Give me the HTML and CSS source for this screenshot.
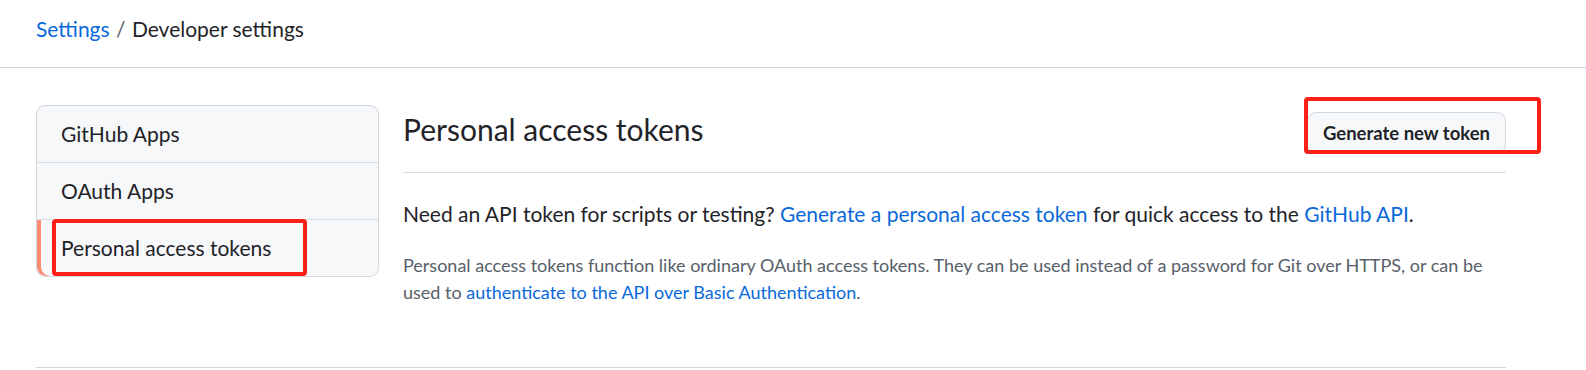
FILE: index.html
```html
<!DOCTYPE html>
<html lang="en">
<head>
  <meta charset="UTF-8">
  <title>Developer settings</title>
  <meta name="viewport" content="width=device-width, initial-scale=1.0">
  <link rel="stylesheet" href="styles.css">
</head>
<body>
<header class="page-head">
  <nav class="crumbs">
    <a href="#">Settings</a>
    <span class="sep">/</span>
    <span class="current">Developer settings</span>
  </nav>
</header>

<div class="layout">
  <nav class="side-menu">
    <a class="menu-item" href="#">GitHub Apps</a>
    <a class="menu-item" href="#">OAuth Apps</a>
    <a class="menu-item selected" href="#">Personal access tokens<span class="mark mark-menu"></span></a>
  </nav>

  <main class="content">
    <div class="subhead">
      <h2>Personal access tokens</h2>
      <div class="subhead-actions">
        <a class="btn" href="#">Generate new token</a>
        <span class="mark mark-btn"></span>
      </div>
    </div>

    <p class="lead">Need an API token for scripts or testing? <a href="#">Generate a personal access token</a> for quick access to the <a href="#">GitHub API</a>.</p>
    <p class="note">Personal access tokens function like ordinary OAuth access tokens. They can be used instead of a password for Git over HTTPS, or can be used to <a href="#">authenticate to the API over Basic Authentication</a>.</p>
  </main>
</div>

<div class="foot-rule"></div>
</body>
</html>
```

FILE: styles.css
```css
body {
  margin: 0;
  font-family: Lato, 'Noto Sans', sans-serif;
  color: #1f2328;
  background: #fff;
}
a {
  color: #0969da;
  text-decoration: none;
}

/* Breadcrumb bar */
.page-head {
  height: 67px;
  border-bottom: 1px solid #d0d7de;
  padding-left: 36px;
}
.crumbs {
  font-size: 21px;
  line-height: 58px;
}
.crumbs .sep {
  color: #57606a;
  margin: 0 1px;
}

/* Sidebar + content */
.layout {
  display: flex;
  gap: 24px;
  width: 1470px;
  margin-left: 36px;
  padding-top: 37px;
}
.side-menu {
  width: 341px;
  flex-shrink: 0;
  align-self: flex-start;
  background: #f6f8fa;
  border: 1px solid #d0d7de;
  border-radius: 9px;
}
.menu-item {
  position: relative;
  display: block;
  height: 56px;
  line-height: 56px;
  padding-left: 24px;
  font-size: 21px;
  color: #1f2328;
  border-top: 1px solid #d8dee4;
}
.menu-item:first-child {
  border-top: 0;
}
.menu-item.selected {
  box-shadow: inset 4px 0 0 #fd8c73;
  border-bottom-left-radius: 9px;
}

.content {
  flex: 1;
  padding-top: 2px;
}
.subhead {
  display: flex;
  align-items: flex-end;
  justify-content: space-between;
  border-bottom: 1px solid #d8dee4;
  padding-bottom: 15px;
}
.subhead h2 {
  margin: 0 0 6px;
  font-size: 30px;
  font-weight: 400;
  line-height: 44px;
}
.subhead-actions {
  position: relative;
  margin-bottom: 3px;
}
.btn {
  display: block;
  height: 40px;
  line-height: 40px;
  padding: 0 15px;
  font-size: 18.5px;
  font-weight: 700;
  color: #1f2328;
  background: #f6f8fa;
  border: 1px solid #d0d7de;
  border-radius: 9px;
}

.lead {
  margin: 26px 0 0;
  font-size: 21px;
  line-height: 30px;
}
.note {
  margin: 23px 0 0;
  font-size: 18px;
  line-height: 27px;
  color: #57606a;
}

.foot-rule {
  width: 1470px;
  margin: 61px 0 0 36px;
  border-top: 1px solid #d0d7de;
}

/* red annotation boxes drawn over the screenshot */
.mark {
  position: absolute;
  border: 4px solid #fb1f17;
  border-radius: 4px;
  pointer-events: none;
}
.mark-menu {
  left: 15px;
  top: -1px;
  width: 247px;
  height: 49px;
}
.mark-btn {
  left: -3px;
  top: -15px;
  width: 229px;
  height: 49px;
}
```
